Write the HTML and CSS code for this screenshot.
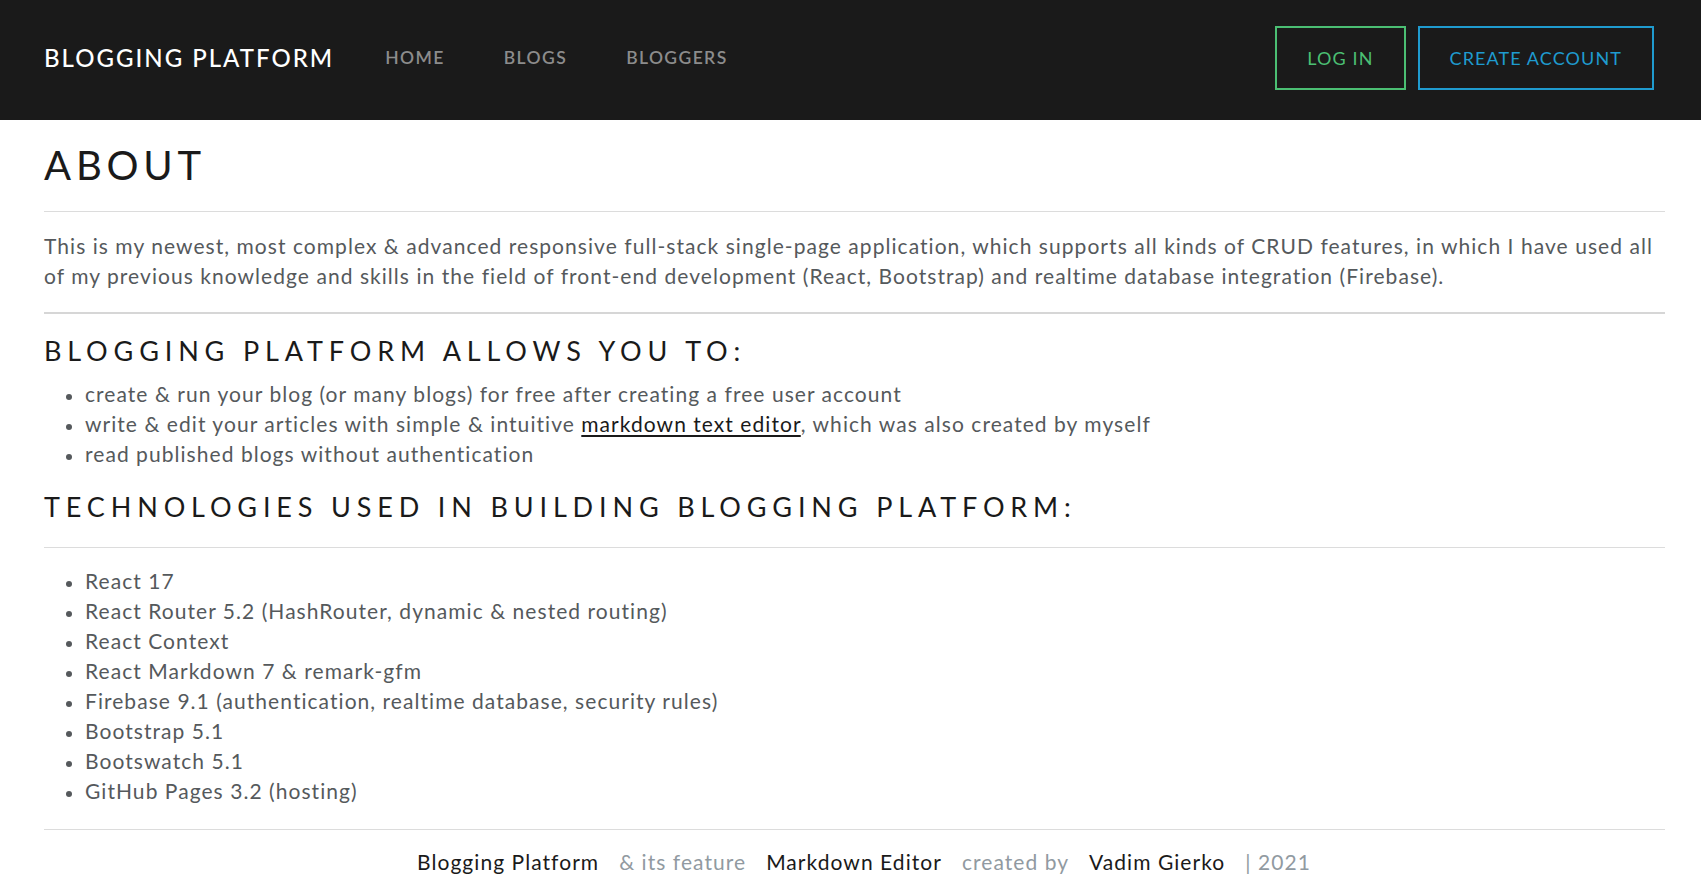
FILE: index.html
```html
<!DOCTYPE html>
<html lang="en">
<head>
<meta charset="utf-8">
<title>Blogging Platform - About</title>
<link rel="stylesheet" href="styles.css">
</head>
<body>
<header class="navbar">
  <div class="nav-left">
    <a class="brand" href="#">BLOGGING PLATFORM</a>
    <nav class="nav-links">
      <a class="nav-link" href="#">HOME</a>
      <a class="nav-link" href="#">BLOGS</a>
      <a class="nav-link" href="#">BLOGGERS</a>
    </nav>
  </div>
  <div class="nav-right">
    <a class="btn btn-success" href="#">LOG IN</a>
    <a class="btn btn-info" href="#">CREATE ACCOUNT</a>
  </div>
</header>
<main class="container">
  <h1 class="title">ABOUT</h1>
  <hr class="rule">
  <p class="lead-text">This is my newest, most complex &amp; advanced responsive full-stack single-page application, which supports all kinds of CRUD features, in which I have used all of my previous knowledge and skills in the field of front-end development (React, Bootstrap) and realtime database integration (Firebase).</p>
  <hr class="rule rule-thick">
  <h3 class="section-title">BLOGGING PLATFORM ALLOWS YOU TO:</h3>
  <ul class="list">
    <li>create &amp; run your blog (or many blogs) for free after creating a free user account</li>
    <li>write &amp; edit your articles with simple &amp; intuitive <a class="text-link" href="#">markdown text editor</a>, which was also created by myself</li>
    <li>read published blogs without authentication</li>
  </ul>
  <h3 class="section-title section-title-2">TECHNOLOGIES USED IN BUILDING BLOGGING PLATFORM:</h3>
  <hr class="rule rule-tech">
  <ul class="list list-tech">
    <li>React 17</li>
    <li>React Router 5.2 (HashRouter, dynamic &amp; nested routing)</li>
    <li>React Context</li>
    <li>React Markdown 7 &amp; remark-gfm</li>
    <li>Firebase 9.1 (authentication, realtime database, security rules)</li>
    <li>Bootstrap 5.1</li>
    <li>Bootswatch 5.1</li>
    <li>GitHub Pages 3.2 (hosting)</li>
  </ul>
  <hr class="rule rule-foot">
  <footer class="footer">
    <a class="foot-link" href="#">Blogging Platform</a>
    <span class="foot-muted">&amp; its feature</span>
    <a class="foot-link" href="#">Markdown Editor</a>
    <span class="foot-muted">created by</span>
    <a class="foot-link" href="#">Vadim Gierko</a>
    <span class="foot-muted">| 2021</span>
  </footer>
</main>
</body>
</html>
```
FILE: styles.css
```css
html, body {
  margin: 0;
  padding: 0;
  background: #fff;
}
body {
  font-family: Lato, "Open Sans", "Liberation Sans", sans-serif;
  color: #55595c;
  font-size: 21px;
  line-height: 30px;
  letter-spacing: 1.05px;
}
a { text-decoration: none; }

/* ---------- navbar ---------- */
.navbar {
  background: #1a1a1a;
  height: 120px;
  display: flex;
  align-items: center;
  justify-content: space-between;
  padding: 0 47px 5px 44px;
  box-sizing: border-box;
}
.nav-left {
  display: flex;
  align-items: center;
}
.brand {
  color: #fff;
  font-size: 24px;
  line-height: 30px;
  font-weight: 500;
  letter-spacing: 2px;
  margin-right: 21px;
}
.nav-links { display: flex; }
.nav-link {
  color: #8c8c8c;
  font-size: 17.5px;
  line-height: 30px;
  font-weight: 600;
  letter-spacing: 1.4px;
  padding: 0 29px 0 30px;
}
.nav-right {
  display: flex;
  gap: 12px;
}
.btn {
  display: flex;
  align-items: center;
  height: 64px;
  box-sizing: border-box;
  padding: 0 30px;
  border: 2px solid;
  font-size: 18px;
  letter-spacing: 1.1px;
  background: transparent;
}
.btn-success { color: #4bbf73; border-color: #4bbf73; }
.btn-info { color: #1f9bcf; border-color: #1f9bcf; }

/* ---------- content ---------- */
.container {
  padding: 0 36px 0 44px;
}
.title {
  margin: 0;
  padding-top: 21px;
  color: #1a1a1a;
  font-size: 40px;
  line-height: 48px;
  font-weight: 400;
  letter-spacing: 4.8px;
}
.rule {
  border: 0;
  height: 1px;
  background: #dcdcdc;
  margin: 0;
}
.title + .rule { margin-top: 22px; }
.lead-text {
  margin: 19px 0 21px;
}
.rule-thick { height: 2px; background: #d6d6d6; }
.section-title {
  margin: 20px 0 0;
  color: #1a1a1a;
  font-size: 27px;
  line-height: 33px;
  font-weight: 400;
  letter-spacing: 5.85px;
}
.list {
  margin: 12px 0 0;
  padding-left: 22px;
  list-style: none;
}
.list li::before {
  content: "";
  display: inline-block;
  width: 6px;
  height: 6px;
  border-radius: 50%;
  background: #55595c;
  margin-right: 13px;
  vertical-align: middle;
}
.text-link {
  color: #1a1a1a;
  text-decoration: underline;
  text-underline-offset: 3px;
}
.section-title-2 { margin-top: 21px; }
.rule-tech { margin-top: 24px; }
.list-tech { margin-top: 18px; }
.rule-foot { margin-top: 23px; }
.footer {
  display: flex;
  justify-content: center;
  gap: 20px;
  padding: 17px 0 0 19px;
}
.foot-link { color: #1a1a1a; }
.foot-muted { color: #919aa1; }
```
